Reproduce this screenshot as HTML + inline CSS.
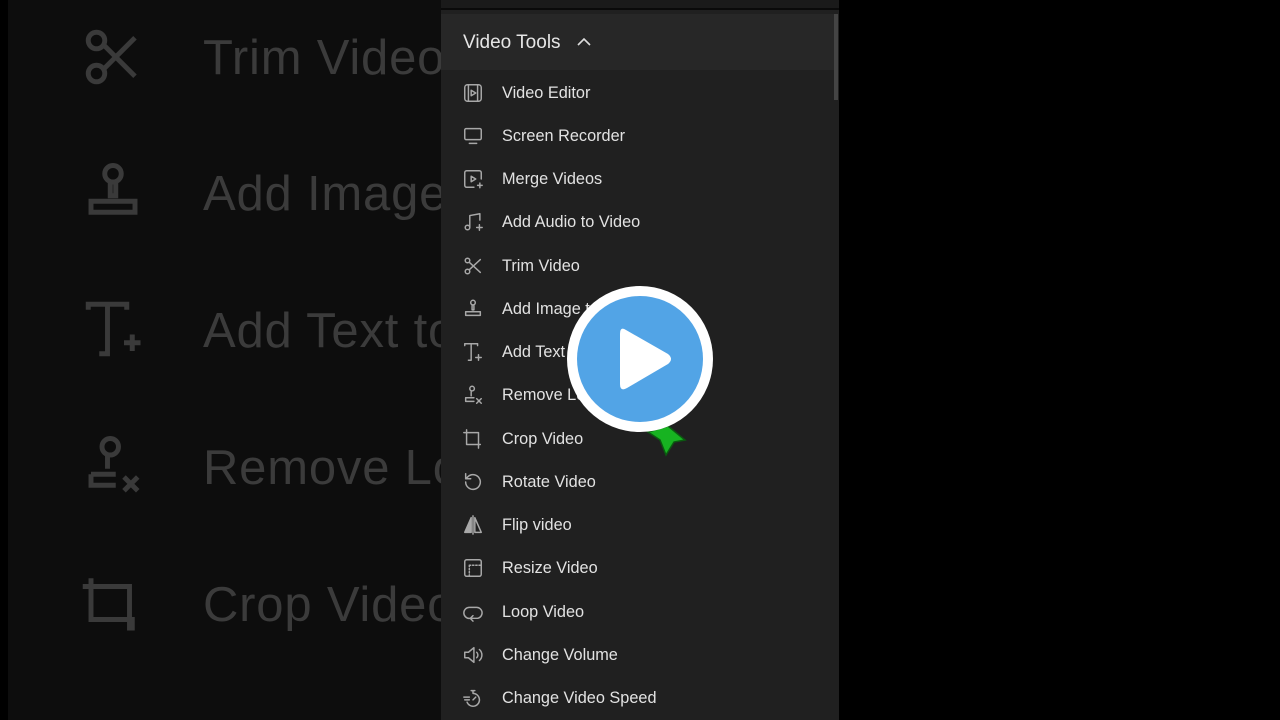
<!DOCTYPE html>
<html><head><meta charset="utf-8"><style>
*{margin:0;padding:0;box-sizing:border-box}
body{width:1280px;height:720px;overflow:hidden;background:#000;position:relative;font-family:"Liberation Sans",sans-serif}
.left{position:absolute;left:8px;top:0;width:433px;height:720px;background:#0d0d0d;overflow:hidden}
.big{position:absolute;left:195px;font-size:49px;color:#3b3b3b;white-space:nowrap;letter-spacing:0.8px}
.bigi{position:absolute;left:72px;width:66px;height:66px}
.panel{position:absolute;left:441px;top:0;width:398px;height:720px;background:#202020}
.top{position:absolute;left:0;top:0;width:398px;height:10px;background:#1a1a1a;border-bottom:2px solid #0a0a0a}
.hdr{position:absolute;left:0;top:14px;width:394px;height:56px;background:#272727;color:#e6e6e6;font-size:19px;padding:18px 0 0 22px}
.scroll{position:absolute;left:393px;top:14px;width:4px;height:86px;background:#444}
.item{position:absolute;left:0;height:40px;width:390px}
.item span{position:absolute;left:61px;top:13px;font-size:16.3px;color:#e2e2e2;white-space:nowrap}
.item svg{position:absolute;left:21px;top:11px;width:22px;height:22px;fill:none;stroke:#a8a8a8;stroke-width:1.6;stroke-linecap:round;stroke-linejoin:round}
</style></head><body>
<div class="left">
 <svg class="bigi" style="top:24px" viewBox="0 0 24 24" fill="none" stroke="#3a3a3a" stroke-width="1.8"><circle cx="6" cy="6" r="3"/><circle cx="6" cy="18" r="3"/><path d="M8.5 7.5L20 19M8.5 16.5L20 5"/></svg>
 <div class="big" style="top:30px">Trim Video</div>
 <svg class="bigi" style="top:160px" viewBox="0 0 24 24" fill="none" stroke="#3a3a3a" stroke-width="1.8"><circle cx="12" cy="5" r="3"/><path d="M11 8v5h2V8M4 15h16v4H4z"/></svg>
 <div class="big" style="top:166px">Add Image to</div>
 <svg class="bigi" style="top:296px" viewBox="0 0 24 24" fill="none" stroke="#3a3a3a" stroke-width="1.8"><path d="M3 5V3h14v2M10 3v18h-3M16 17h6M19 14v6"/></svg>
 <div class="big" style="top:303px">Add Text to</div>
 <svg class="bigi" style="top:433px" viewBox="0 0 24 24" fill="none" stroke="#3a3a3a" stroke-width="1.8"><circle cx="11" cy="5" r="3"/><path d="M10 8v5M4 15h9M4 15v4h9M16 16l5 5M21 16l-5 5"/></svg>
 <div class="big" style="top:440px">Remove Logo</div>
 <svg class="bigi" style="top:570px" viewBox="0 0 24 24" fill="none" stroke="#3a3a3a" stroke-width="1.8"><path d="M4 3v15h15v4M1 6h17v16"/></svg>
 <div class="big" style="top:577px">Crop Video</div>
</div>
<div class="panel">
 <div class="top"></div>
 <div class="hdr">Video Tools <svg width="16" height="10" viewBox="0 0 16 10" style="margin-left:10px;vertical-align:1px"><path d="M2 8l6-6 6 6" fill="none" stroke="#ddd" stroke-width="1.6"/></svg></div>
 <div class="scroll"></div>
 <div class="item" style="top:71px"><svg viewBox="0 0 24 24"><rect x="3" y="3" width="18" height="18" rx="3"/><path d="M7 3v18M17 3v18M10 9l5 3-5 3z"/></svg><span>Video Editor</span></div>
 <div class="item" style="top:114px"><svg viewBox="0 0 24 24"><rect x="3" y="4" width="18" height="12" rx="1.5"/><path d="M8 20h8"/></svg><span>Screen Recorder</span></div>
 <div class="item" style="top:157px"><svg viewBox="0 0 24 24"><path d="M21 12V5a2 2 0 0 0-2-2H5a2 2 0 0 0-2 2v14a2 2 0 0 0 2 2h8M10 9l5 3-5 3zM17 19h5M19.5 16.5v5"/></svg><span>Merge Videos</span></div>
 <div class="item" style="top:200px"><svg viewBox="0 0 24 24"><circle cx="6" cy="18" r="2.5"/><path d="M8.5 18V5l11-2v7M16 18h6M19 15v6"/></svg><span>Add Audio to Video</span></div>
 <div class="item" style="top:244px"><svg viewBox="0 0 24 24"><circle cx="6" cy="6" r="2.5"/><circle cx="6" cy="18" r="2.5"/><path d="M8 8l12 11M8 16L20 5"/></svg><span>Trim Video</span></div>
 <div class="item" style="top:287px"><svg viewBox="0 0 24 24"><circle cx="12" cy="5" r="2.5"/><path d="M11 8v5h2V8M4 15h16v4H4z"/></svg><span>Add Image to Video</span></div>
 <div class="item" style="top:330px"><svg viewBox="0 0 24 24"><path d="M3 5V3h14v2M10 3v18H7M15 18h6M18 15v6"/></svg><span>Add Text to Video</span></div>
 <div class="item" style="top:373px"><svg viewBox="0 0 24 24"><circle cx="11" cy="5" r="2.5"/><path d="M10 8v5M4 15h9M4 15v4h9M16 16l5 5M21 16l-5 5"/></svg><span>Remove Logo</span></div>
 <div class="item" style="top:417px"><svg viewBox="0 0 24 24"><path d="M5 2v16h15M2 5h16v17"/></svg><span>Crop Video</span></div>
 <div class="item" style="top:460px"><svg viewBox="0 0 24 24"><path d="M4 12a8 8 0 1 0 2.5-5.8L4 8.5M4 3v5.5h5.5"/></svg><span>Rotate Video</span></div>
 <div class="item" style="top:503px"><svg viewBox="0 0 24 24"><path d="M10 4L3 20h7z" fill="#a8a8a8"/><path d="M14 4v16h7zM12 2v20"/></svg><span>Flip video</span></div>
 <div class="item" style="top:546px"><svg viewBox="0 0 24 24"><rect x="3" y="3" width="18" height="18" rx="2"/><path d="M8 9h13M8 9v12" stroke-dasharray="1.5 2"/></svg><span>Resize Video</span></div>
 <div class="item" style="top:590px"><svg viewBox="0 0 24 24"><path d="M9 19H8a6 6 0 0 1 0-12h8a6 6 0 0 1 1 11.9H10M12 16l-3 3 3 3"/></svg><span>Loop Video</span></div>
 <div class="item" style="top:633px"><svg viewBox="0 0 24 24"><path d="M3 9h4l6-5v16l-6-5H3zM16 9a4 4 0 0 1 0 6M19 6a8 8 0 0 1 0 12"/></svg><span>Change Volume</span></div>
 <div class="item" style="top:676px"><svg viewBox="0 0 24 24"><path d="M10 4h4M12 4v3M12 7a7 7 0 1 1-6.5 9.5M2 11h6M3 14h5M12 14l3-3"/></svg><span>Change Video Speed</span></div>
</div>
<svg style="position:absolute;left:0;top:0" width="1280" height="720">
 <polygon points="648,432 668,426 685,440 674,442 666,455 660,440" fill="#17b321" stroke="#0b5a10" stroke-width="1.5"/>
 <circle cx="640" cy="359" r="73" fill="#fff"/>
 <circle cx="640" cy="359" r="63" fill="#52a4e6"/>
 <path d="M626 330 Q620 326 620 334 L620 384 Q620 392 627 388 L668 364 Q674 359 668 354 Z" fill="#fff"/>
</svg>
</body></html>
